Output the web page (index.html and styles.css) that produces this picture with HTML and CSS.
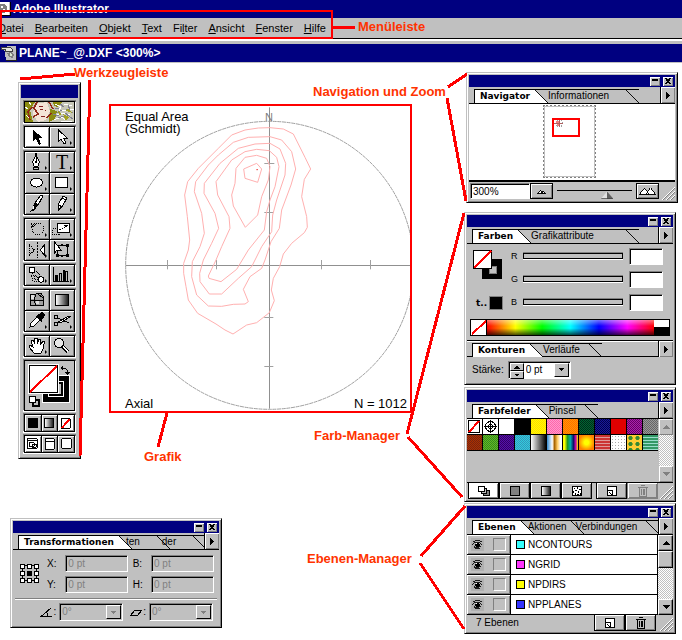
FILE: index.html
```html
<!DOCTYPE html>
<html lang="de">
<head>
<meta charset="utf-8">
<title>Adobe Illustrator</title>
<link rel="stylesheet" href="styles.css">
</head>
<body>
<svg class="defs" width="0" height="0" aria-hidden="true">
  <defs>
    <symbol id="slant" viewBox="0 0 14 15"><path d="M0 0L14 15H0Z" fill="#fff"/><path d="M0 0L14 15" stroke="#000" fill="none"/><path d="M0 .5H14" stroke="#000"/></symbol>
    <symbol id="slant-end" viewBox="0 0 14 15"><path d="M0 .5L14 15" stroke="#000" fill="none"/></symbol>
    <symbol id="more" viewBox="0 0 15 15"><path d="M5 3L10 7.500L5 12Z"/></symbol>
    <symbol id="min" viewBox="0 0 10 9"><path d="M2 2H8V4H2Z"/></symbol>
    <symbol id="close" viewBox="0 0 10 9"><path d="M2 1H4L5 3L6 1H8L6 4.500L8 7H6L5 5.500L4 7H2L4 4.500Z"/></symbol>
    <symbol id="grip" viewBox="0 0 14 14"><path d="M1 14L14 1M5 14L14 5M9 14L14 9" stroke="#fff"/><path d="M2 14L14 2M6 14L14 6M10 14L14 10" stroke="#808080"/></symbol>
    <symbol id="page" viewBox="0 0 16 14"><path d="M3.500 2.500H12.500V11.500H3.500Z" fill="#fff" stroke="#000"/><path d="M3.500 6.500H8.500V11.500M5 8L8 11" fill="none" stroke="#000"/></symbol>
    <symbol id="trash" viewBox="0 0 16 14"><path d="M3 3.500H13M6 1.500H10M4.500 4V12.500H11.500V4M6.500 5V11M8.500 5V11M9.500 5V11" fill="none" stroke="currentColor"/></symbol>
    <symbol id="eye" viewBox="0 0 13 11"><path d="M1 3L4 1H9L12 3M0 6L3 3.500H9L12 6.500M2 7L4 9H8L11 7M2 9L5 10.500H9" fill="none" stroke="#000"/><circle cx="6.500" cy="6" r="2.800"/><path d="M5 4H6V5H5Z" fill="#fff"/></symbol>
    <symbol id="up" viewBox="0 0 8 8"><path d="M4 2L8 6H0Z" fill="currentColor"/></symbol>
    <symbol id="down" viewBox="0 0 8 8"><path d="M0 2H8L4 6Z" fill="currentColor"/></symbol>
  </defs>
</svg>

<div class="screen">
  <header class="appbar">
    <svg class="appicon" viewBox="0 0 11 14"><path d="M0 0H11V14H0Z" fill="#c0c0c0"/><path d="M0 0H9V13H0Z" fill="#fff"/><path d="M0 2H4L7 5V9L4 11H0Z" fill="#808080"/><path d="M1 4H3V6H1ZM3 7H5V10H3Z" fill="#fff"/><path d="M10 0V14M0 13.500H11" stroke="#000"/></svg>
    <span>Adobe Illustrator</span>
  </header>
  <nav class="menubar" aria-label="Hauptmenü">
    <button><u>D</u>atei</button><button><u>B</u>earbeiten</button><button><u>O</u>bjekt</button><button><u>T</u>ext</button><button>Fi<u>l</u>ter</button><button><u>A</u>nsicht</button><button><u>F</u>enster</button><button><u>H</u>ilfe</button>
  </nav>
  <div class="docbar">
    <svg class="docicon" viewBox="0 0 16 16"><path d="M3 3L7 1H15V15H5Z" fill="#c0c0c0"/><path d="M0 2H9L11 4V6H4V4H0Z" fill="#e8e8e0" stroke="#404040"/><path d="M6 8L10 7L13 9L12 13L8 12Z" fill="#808080"/><path d="M9 8L12 10L9 11Z" fill="#d8e8d0"/><path d="M5 15.500H15V4" stroke="#202020" fill="none"/></svg>
    <span>PLANE~_@.DXF &lt;300%&gt;</span>
  </div>

  <aside class="window toolbox" aria-label="Werkzeuge">
    <div class="caption"></div>
    <div class="tools">
      <div class="group"><svg class="venus" viewBox="0 0 49 20"><path d="M0 0H49V20H0Z" fill="#c8c8b8"/><path d="M0 0H10L5 8L8 20H0ZM28 0H37L33 5L29 4ZM25 7L32 9L30 17L24 20Z" fill="#8c8c10"/><path d="M10 2L22 0L25 9L21 18L13 20L8 12Z" fill="#f4e4d8"/><path d="M7 5L3 10L5 18M12 0L9 6L13 12L8 15M24 0L28 7M22 16L26 11" stroke="#902818" fill="none" stroke-width="1.500"/><path d="M14 5L18 4M20 8H21M15 7H18M16 14H20" stroke="#802020"/><path d="M0 5L3 7M4 0L6 3M1 13L4 16M30 2L36 5L34 8L42 9M32 13L38 11L45 13M29 18L36 15L41 18M39 2L47 4M44 8L49 7M36 19H47" fill="none" stroke="#fff"/><path d="M35 2L39 5M37 8L32 11M40 11L48 17M33 16L39 14M43 3L45 8M28 12L34 14M41 7L48 11M30 6L34 7" stroke="#808090" fill="none"/><path d="M38 12L44 15L41 19ZM43 6L47 11L41 9ZM33 9L37 12L34 13Z" fill="#a0a020"/></svg></div>
      <div class="group cells">
        <button class="tool on" aria-label="Auswahl"><svg viewBox="0 0 24 20"><path d="M8 3V14L11 12L14 18L16 17L14 11H18Z"/></svg></button>
        <button class="tool sub" aria-label="Direktauswahl"><svg viewBox="0 0 24 20"><path d="M8.500 3V14L11 12L14 17L16 16L13.500 11H17Z" fill="#fff" stroke="#000"/></svg></button>
      </div>
      <div class="group cells">
        <button class="tool sub" aria-label="Zeichenstift"><svg viewBox="0 0 24 20"><path d="M10.500 1V4L7.500 10L9 14H13L14.500 10L11.500 4V1" fill="#fff" stroke="#000"/><path d="M11 4V10M8 15H14M8 17H14M8 15V17M13.500 15V17" stroke="#000"/><path d="M10 9H12V11H10Z"/></svg></button>
        <button class="tool sub type" aria-label="Text">T</button>
        <button class="tool sub" aria-label="Ellipse"><svg viewBox="0 0 24 20"><ellipse cx="11.500" cy="9.500" rx="6" ry="4.500" fill="#fff" stroke="#000"/></svg></button>
        <button class="tool sub" aria-label="Rechteck"><svg viewBox="0 0 24 20"><path d="M5.500 4.500H17.500V14.500H5.500Z" fill="#fff" stroke="#000"/></svg></button>
        <button class="tool" aria-label="Pinsel"><svg viewBox="0 0 24 20"><path d="M16 1L10 9L13 11L18 2Z" fill="#fff" stroke="#000"/><path d="M9 9L13 11L10 16L4 18L8 14Z"/><path d="M9 12L8 15" stroke="#fff"/></svg></button>
        <button class="tool sub" aria-label="Buntstift"><svg viewBox="0 0 24 20"><path d="M13 2L17 4L12 13L8 16L8 11Z" fill="#fff" stroke="#000"/><path d="M12 4L16 6M9 11L12 13M8 14L10 15L8 17Z" stroke="#000"/></svg></button>
      </div>
      <div class="group cells">
        <button class="tool sub" aria-label="Drehen"><svg viewBox="0 0 24 20"><path d="M8 6L10 4H15L18 7V12L16 15H10L7 12V9" fill="none" stroke="#000" stroke-dasharray="1 1"/><path d="M6 4L8 8L11 5M6 7L7 9" stroke="#000" fill="none"/></svg></button>
        <button class="tool sub" aria-label="Skalieren"><svg viewBox="0 0 24 20"><path d="M2.500 9.500H9.500V15.500H2.500Z" fill="none" stroke="#000" stroke-dasharray="1 1"/><path d="M7.500 4.500H19.500V13.500H7.500Z" fill="#fff" stroke="#000"/><path d="M9 11L15 8" stroke="#000" stroke-dasharray="2 1"/><path d="M14 6H18L16 9Z"/></svg></button>
        <button class="tool sub" aria-label="Spiegeln"><svg viewBox="0 0 24 20"><path d="M4.500 5L9.500 10L4.500 15Z" fill="none" stroke="#000" stroke-dasharray="1 1"/><path d="M12.500 2V18" stroke="#000" stroke-dasharray="2 1"/><path d="M19.500 5V15L15 10Z" fill="#fff" stroke="#000"/></svg></button>
        <button class="tool" aria-label="Frei transformieren"><svg viewBox="0 0 24 20"><path d="M7.500 5.500H17.500V15.500H7.500Z" fill="none" stroke="#000"/><path d="M16 4H19V7H16ZM16 14H19V17H16ZM6 14H9V17H6ZM11 4H13V6H11ZM11 15H13V17H11Z"/><path d="M4.500 2V13L7 10L11 10Z" fill="#fff" stroke="#000"/></svg></button>
      </div>
      <div class="group cells">
        <button class="tool sub" aria-label="Angleichen"><svg viewBox="0 0 24 20"><path d="M7 6H12V8H14V12H11V10H8ZM6 10H9V14H12V16H8Z" fill="none" stroke="#000" stroke-dasharray="1 1"/><path d="M4.500 2.500H9.500V7.500H4.500Z" fill="#fff" stroke="#000"/><circle cx="16" cy="14.500" r="2.700" fill="#fff" stroke="#000"/></svg></button>
        <button class="tool sub" aria-label="Diagramm"><svg viewBox="0 0 24 20"><path d="M3.500 2V16.500H19" fill="none" stroke="#000"/><path d="M5 10H8V16H5ZM13 5H15V16H13Z"/><path d="M9.500 8.500H11.500V16.500H9.500ZM15.500 6.500H17.500V16.500H15.500Z" fill="#c0c0c0" stroke="#000"/></svg></button>
      </div>
      <div class="group cells">
        <button class="tool" aria-label="Gitter"><svg viewBox="0 0 24 20"><path d="M5.500 4.500L16 3.500L18.500 7V15.500H5.500Z" fill="#a0a0a0" stroke="#000"/><path d="M11 4C9 8 9 12 11 16M6 10H18M13 4L18 8" fill="none" stroke="#000"/><path d="M6 5H9V9H6ZM11 11H14V14H11Z" fill="#e0e0e0"/></svg></button>
        <button class="tool" aria-label="Verlauf"><span class="ramp"></span></button>
        <button class="tool sub" aria-label="Pipette"><svg viewBox="0 0 24 20"><path d="M12 6L6 12L5 16L9 15L15 9" fill="#fff" stroke="#000"/><path d="M11 5L13 3H14L17 1L20 3L19 7L17 8V10L16 11Z"/></svg></button>
        <button class="tool sub" aria-label="Schere"><svg viewBox="0 0 24 20"><path d="M8 7L19 12M8 12L20 6" stroke="#000"/><path d="M8 11L19 5H21L12 11Z" fill="#fff" stroke="#000"/><circle cx="6" cy="6" r="2" fill="none" stroke="#000"/><circle cx="6" cy="13" r="2" fill="none" stroke="#000"/></svg></button>
      </div>
      <div class="group cells">
        <button class="tool sub" aria-label="Hand"><svg viewBox="0 0 24 20"><path d="M9 17L4 11L5 9L8 11L6 5L8 4L10 8L9.500 2H12L12.500 8L14 3L16 3.500L15.500 9L18 5L19.500 6L18 13L16 17Z" fill="#fff" stroke="#000"/></svg></button>
        <button class="tool" aria-label="Lupe"><svg viewBox="0 0 24 20"><circle cx="9" cy="7" r="4.500" fill="#e8e8e8" stroke="#000"/><path d="M12 10L18 16" stroke="#000" stroke-width="3"/><path d="M13 10.500L18 15.500" stroke="#fff"/></svg></button>
      </div>
      <div class="group paint"><svg viewBox="0 0 49 49">
        <path d="M18 15H44V41H18Z"/><path d="M17.500 14.500H44.500V41.500H17.500Z" fill="none" stroke="#fff"/><path d="M23.500 20.500H38.500V35.500H23.500Z" fill="none" stroke="#fff"/><path d="M26 23H36V33H26Z" fill="#c0c0c0"/>
        <path d="M4.500 4.500H32.500V31.500H4.500Z" fill="#fff" stroke="#000"/><path d="M3.500 3.500H33.500V32.500H3.500Z" fill="none" stroke="#fff"/><path d="M5 31L32 5" stroke="#f00" stroke-width="2"/>
        <path d="M37 7H40L42 9V12" stroke="#000" fill="none"/><path d="M35 7L38 4V10ZM39 11H45L42 14Z"/>
        <path d="M8 39H14V45H8Z" fill="#c0c0c0" stroke="#000" stroke-width="2"/><path d="M4.500 35.500H10.500V41.500H4.500Z" fill="#fff" stroke="#000"/>
      </svg></div>
      <div class="group modes">
        <button class="tool" aria-label="Farbe"><svg viewBox="0 0 16 16"><path d="M3 3H13V13H3Z"/></svg></button>
        <button class="tool" aria-label="Verlaufsfüllung"><span class="ramp small"></span></button>
        <button class="tool on" aria-label="Ohne"><svg viewBox="0 0 16 16"><path d="M3.500 3.500H12.500V13.500H3.500Z" fill="#fff" stroke="#000"/><path d="M4 13L12 4" stroke="#f00" stroke-width="2"/></svg></button>
      </div>
      <div class="group modes">
        <button class="tool on" aria-label="Standardfenster"><svg viewBox="0 0 16 16"><path d="M2.500 2.500H12.500V12.500H2.500ZM3 4.500H12M4.500 6.500H9.500V10.500H4.500ZM7.500 8.500H11.500V11.500H7.500Z" fill="#fff" stroke="#000"/></svg></button>
        <button class="tool" aria-label="Vollbild mit Menü"><svg viewBox="0 0 16 16"><path d="M3.500 2.500H12.500V13.500H3.500ZM3 5.500H13" fill="#fff" stroke="#000"/></svg></button>
        <button class="tool" aria-label="Vollbild"><svg viewBox="0 0 16 16"><rect x="3.500" y="2.500" width="10" height="10" rx="1" fill="#fff" stroke="#000"/></svg></button>
      </div>
    </div>
  </aside>

  <figure class="plot">
    <svg viewBox="18 18 897 915" preserveAspectRatio="none">
      <g fill="none" stroke="#a0a0a0" stroke-width="3">
        <circle cx="494" cy="496" r="432" stroke-dasharray="12 2"/>
        <path d="M493.500 22V926M62 496.500H915" stroke="#909090"/>
        <path d="M187.500 480V508M334.500 480V508M649.500 480V508M796.500 480V508M478 190.500H508M478 337.500H505M478 652.500H505M478 799.500H505"/>
      </g>
      <g fill="none" stroke="#ffb0b0" stroke-width="3" stroke-linejoin="round">
        <path d="M495 83L535 87L565 102L600 172L617 207L598 238L590 290L605 350L607 382L598 398L560 430L535 462L524 500L505 535L499 570L508 602L493 638L455 668L425 675L384 702L360 690L333 672L278 640L250 600L243 560L236 520V490L250 450L254 420L247 350L239 285L248 245L280 205L340 145L380 105L420 90L460 84Z"/>
        <path d="M495 110L530 120L560 155L572 207L558 255L530 330L523 385L498 425L480 480L470 505L435 530L415 568L430 605L420 612L385 613L350 619L310 618L275 585L260 530L262 485L285 440L298 400L290 340L268 275L272 245L310 195L340 165L385 127L430 112Z"/>
        <path d="M495 130L525 147L542 190L540 225L515 300L503 345L500 395L470 440L440 500L400 535L350 582H313L285 545L284 520L295 480L320 430L341 385L330 340L297 280L298 250L345 190L400 145L450 132Z"/>
        <path d="M493 152L515 172L522 200L510 260L495 300L485 335L478 390L430 450L395 508L348 545L312 535L310 528L333 480L350 440L375 385L372 350L338 285L333 245L380 180L420 155L455 148Z"/>
        <path d="M455 166L485 175L495 200L490 240L470 290L458 345L421 382L385 318L380 285L390 250L393 205L420 172Z"/>
        <path d="M455 190L470 207L458 247L420 235L416 207Z"/>
        <path d="M454 209H459" stroke="#f04040"/>
      </g>
    </svg>
    <span class="north">N</span>
    <figcaption>
      <p>Equal Area<br>(Schmidt)</p>
      <p class="foot"><span>Axial</span><span>N = 1012</span></p>
    </figcaption>
  </figure>

  <section class="window navigator">
    <div class="caption"><button aria-label="Minimieren"><svg viewBox="0 0 10 9"><use href="#min"/></svg></button><button aria-label="Schließen"><svg viewBox="0 0 10 9"><use href="#close"/></svg></button></div>
    <div class="tabs">
      <button class="tab active">Navigator<svg class="cut"><use href="#slant"/></svg></button><button class="tab">Informationen<svg class="cut gap"><use href="#slant-end"/></svg></button><button class="more" aria-label="Palettenmenü"><svg viewBox="0 0 15 15"><use href="#more"/></svg></button>
    </div>
    <div class="preview"><div class="sheet"><div class="view"><svg viewBox="0 0 10 8"><circle cx="5" cy="3.500" r="3.500" fill="none" stroke="#a0a0a0" stroke-dasharray="1 1"/><path d="M2 1H6V5L3 6Z" fill="#f08080"/><path d="M5 0V7M0 3.500H9" stroke="#b06060"/></svg></div></div></div>
    <div class="navbar">
      <input type="text" value="300%" aria-label="Zoomstufe">
      <button class="raised" aria-label="Auszoomen"><svg viewBox="0 0 22 14"><path d="M7 9.500L10 6L12 9M10 9.500H15L12.500 6.500L11 9M6 9.500H16" fill="#fff" stroke="#000"/></svg></button>
      <input class="zoom" type="range" min="0" max="100" value="70" aria-label="Zoom">
      <button class="raised" aria-label="Einzoomen"><svg viewBox="0 0 22 14"><path d="M2.500 10.500L8 4L13 10.500ZM9.500 10.500L14 3.500L19.500 10.500Z" fill="#fff" stroke="#000"/></svg></button>
      <svg class="grip"><use href="#grip"/></svg>
    </div>
  </section>

  <section class="window colors">
    <div class="caption"><button aria-label="Minimieren"><svg viewBox="0 0 10 9"><use href="#min"/></svg></button><button aria-label="Schließen"><svg viewBox="0 0 10 9"><use href="#close"/></svg></button></div>
    <div class="tabs">
      <button class="tab active">Farben<svg class="cut"><use href="#slant"/></svg></button><button class="tab">Grafikattribute<svg class="cut far"><use href="#slant-end"/></svg></button><button class="more" aria-label="Palettenmenü"><svg viewBox="0 0 15 15"><use href="#more"/></svg></button>
    </div>
    <div class="mixer">
      <div class="chips">
        <svg viewBox="0 0 29 29"><path d="M9 9H29V29H9Z"/><path d="M16 16H23V23H16Z" fill="#c0c0c0" stroke="#808080"/><path d="M.5 .5H18.500V18.500H.5Z" fill="#fff" stroke="#000"/><path d="M1 18L18 1" stroke="#f00" stroke-width="2"/></svg>
        <div class="web"><span>t..</span><i></i></div>
      </div>
      <div class="channels">
        <label for="r">R</label><input id="r" type="range"><input type="text" aria-label="R Wert">
        <label for="g">G</label><input id="g" type="range"><input type="text" aria-label="G Wert">
        <label for="b">B</label><input id="b" type="range"><input type="text" aria-label="B Wert">
      </div>
    </div>
    <div class="spectrum"><svg viewBox="0 0 16 15"><path d="M0 0H16V15H0Z" fill="#fff"/><path d="M1 14L15 1" stroke="#f00" stroke-width="2"/><path d="M15.500 0V15" stroke="#000"/></svg><div class="hues"></div><div class="bw"></div></div>
    <div class="tabs second">
      <button class="tab active">Konturen<svg class="cut"><use href="#slant"/></svg></button><button class="tab">Verläufe<svg class="cut near"><use href="#slant-end"/></svg></button><button class="more" aria-label="Palettenmenü"><svg viewBox="0 0 15 15"><use href="#more"/></svg></button>
    </div>
    <div class="stroke">
      <label for="weight">Stärke:</label>
      <div class="combo">
        <div class="spin"><button aria-label="Mehr"><svg viewBox="0 0 8 8"><use href="#up"/></svg></button><button aria-label="Weniger"><svg viewBox="0 0 8 8"><use href="#down"/></svg></button></div>
        <select id="weight"><option>0 pt</option></select>
        <span class="drop"><svg viewBox="0 0 8 8"><use href="#down"/></svg></span>
      </div>
    </div>
  </section>

  <section class="window swatches">
    <div class="caption"><button aria-label="Minimieren"><svg viewBox="0 0 10 9"><use href="#min"/></svg></button><button aria-label="Schließen"><svg viewBox="0 0 10 9"><use href="#close"/></svg></button></div>
    <div class="tabs">
      <button class="tab active">Farbfelder<svg class="cut"><use href="#slant"/></svg></button><button class="tab">Pinsel<svg class="cut near"><use href="#slant-end"/></svg></button><button class="more" aria-label="Palettenmenü"><svg viewBox="0 0 15 15"><use href="#more"/></svg></button>
    </div>
    <div class="pane">
      <div class="wells">
        <i class="white"><svg viewBox="0 0 15 15"><path d="M1.500 1.500H12.500V13.500H1.500Z" fill="#fff" stroke="#000"/><path d="M2 13L12 2" stroke="#f00" stroke-width="2"/></svg></i>
        <i class="white"><svg viewBox="0 0 15 15"><circle cx="7.500" cy="7.500" r="5" fill="none" stroke="#000"/><circle cx="7.500" cy="7.500" r="2" fill="none" stroke="#000"/><path d="M7.500 1V14M1 7.500H14" stroke="#000"/></svg></i>
        <i class="white"></i><i class="black"></i><i class="yellow"></i><i class="pink"></i><i class="orange"></i><i class="forest"></i><i class="navy"></i><i class="red"></i><i class="purple"></i><i class="gray"></i>
        <i class="rust"></i><i class="green"></i><i class="violet"></i><i class="cyan"></i><i class="fade"></i><i class="chrome"></i><i class="rainbow"></i><i class="sun"></i><i class="brick"></i><i class="noise"></i><i class="leaf"></i><i class="stripes"></i>
      </div>
      <div class="scroll off"><button aria-label="Nach oben"><svg><use href="#up"/></svg></button><span class="track"></span><button aria-label="Nach unten"><svg><use href="#down"/></svg></button></div>
    </div>
    <div class="actions">
      <button class="raised on" aria-label="Alle"><svg viewBox="0 0 16 14"><path d="M7.500 6.500H13.500V11.500H7.500Z" fill="#808080" stroke="#000"/><path d="M5.500 4.500H10.500V9.500H5.500Z" fill="#c0c0c0" stroke="#000"/><path d="M2.500 2.500H8.500V7.500H2.500Z" fill="#fff" stroke="#000"/></svg></button>
      <button class="raised" aria-label="Farbfelder"><svg viewBox="0 0 16 14"><path d="M3.500 2.500H12.500V11.500H3.500Z" fill="#808080" stroke="#000"/></svg></button>
      <button class="raised" aria-label="Verläufe"><span class="ramp small"></span></button>
      <button class="raised" aria-label="Muster"><svg viewBox="0 0 16 14"><path d="M3.500 2.500H12.500V11.500H3.500Z" fill="#fff" stroke="#000"/><path d="M5 4H6V5H5ZM8 3H9V5H8ZM10 5H12V6H10ZM6 6H8V7H6ZM4 7H5V9H4ZM9 7H10V9H9ZM6 9H7V11H6ZM11 9H12V11H11ZM8 10H10V11H8Z"/></svg></button>
      <button class="raised set" aria-label="Neu"><svg viewBox="0 0 16 14"><use href="#page"/></svg></button>
      <button class="raised dim" aria-label="Löschen"><svg viewBox="0 0 16 14"><use href="#trash"/></svg></button>
      <svg class="grip"><use href="#grip"/></svg>
    </div>
  </section>

  <section class="window layers">
    <div class="caption"><button aria-label="Minimieren"><svg viewBox="0 0 10 9"><use href="#min"/></svg></button><button aria-label="Schließen"><svg viewBox="0 0 10 9"><use href="#close"/></svg></button></div>
    <div class="tabs">
      <button class="tab active">Ebenen<svg class="cut"><use href="#slant"/></svg></button><button class="tab tucked">Aktionen<svg class="cut close"><use href="#slant-end"/></svg></button><button class="tab tucked">Verbindungen<svg class="cut near"><use href="#slant-end"/></svg></button><button class="more" aria-label="Palettenmenü"><svg viewBox="0 0 15 15"><use href="#more"/></svg></button>
    </div>
    <div class="pane">
      <ul class="list">
        <li><div class="flags"><button aria-label="Sichtbar"><svg viewBox="0 0 13 11"><use href="#eye"/></svg></button><button aria-label="Fixiert"></button></div><span class="name"><i class="c1"></i>NCONTOURS</span></li>
        <li><div class="flags"><button aria-label="Sichtbar"><svg viewBox="0 0 13 11"><use href="#eye"/></svg></button><button aria-label="Fixiert"></button></div><span class="name"><i class="c2"></i>NGRID</span></li>
        <li><div class="flags"><button aria-label="Sichtbar"><svg viewBox="0 0 13 11"><use href="#eye"/></svg></button><button aria-label="Fixiert"></button></div><span class="name"><i class="c3"></i>NPDIRS</span></li>
        <li><div class="flags"><button aria-label="Sichtbar"><svg viewBox="0 0 13 11"><use href="#eye"/></svg></button><button aria-label="Fixiert"></button></div><span class="name"><i class="c4"></i>NPPLANES</span></li>
      </ul>
      <div class="scroll"><button aria-label="Nach oben"><svg><use href="#up"/></svg></button><span class="thumb"></span><span class="track"></span><button aria-label="Nach unten"><svg><use href="#down"/></svg></button></div>
    </div>
    <div class="actions plain">
      <span class="count">7 Ebenen</span>
      <button class="raised" aria-label="Neue Ebene"><svg viewBox="0 0 16 14"><use href="#page"/></svg></button>
      <button class="raised" aria-label="Löschen"><svg viewBox="0 0 16 14"><use href="#trash"/></svg></button>
      <svg class="grip"><use href="#grip"/></svg>
    </div>
  </section>

  <section class="window transform">
    <div class="caption"><button aria-label="Minimieren"><svg viewBox="0 0 10 9"><use href="#min"/></svg></button><button aria-label="Schließen"><svg viewBox="0 0 10 9"><use href="#close"/></svg></button></div>
    <div class="tabs">
      <button class="tab active">Transformationen<svg class="cut"><use href="#slant"/></svg></button><button class="tab tucked">ten<svg class="cut gap"><use href="#slant-end"/></svg></button><button class="tab tucked">der<svg class="cut gap"><use href="#slant-end"/></svg></button><button class="more" aria-label="Palettenmenü"><svg viewBox="0 0 15 15"><use href="#more"/></svg></button>
    </div>
    <div class="fields">
      <svg class="origin" viewBox="0 0 19 20"><path d="M2.500 2.500H16.500V17.500H2.500Z" fill="none" stroke="#000"/><path d="M.5 1.500H4.500V5.500H.5ZM7.500 1.500H11.500V5.500H7.500ZM14.500 1.500H18.500V5.500H14.500ZM.5 8.500H4.500V12.500H.5ZM14.500 8.500H18.500V12.500H14.500ZM.5 15.500H4.500V19.500H.5ZM7.500 15.500H11.500V19.500H7.500ZM14.500 15.500H18.500V19.500H14.500Z" fill="#fff" stroke="#000"/><path d="M7 8H12V13H7Z"/></svg>
      <div class="coords">
        <label for="tx">X:</label><input id="tx" type="text" value="0 pt" disabled>
        <label for="tb">B:</label><input id="tb" type="text" value="0 pt" disabled>
        <label for="ty">Y:</label><input id="ty" type="text" value="0 pt" disabled>
        <label for="th">H:</label><input id="th" type="text" value="0 pt" disabled>
      </div>
    </div>
    <div class="angles">
      <label for="rot"><svg viewBox="0 0 12 10"><path d="M11 1L1 9.500H12M6 5Q8 6 8 9" fill="none" stroke="#000"/></svg>:</label>
      <div class="combo"><select id="rot" disabled><option>0°</option></select><span class="drop"><svg viewBox="0 0 8 8"><use href="#down"/></svg></span></div>
      <label for="shear"><svg viewBox="0 0 12 10"><path d="M4.500 3.500H11.500L7.500 8.500H.5Z" fill="none" stroke="#000"/></svg>:</label>
      <div class="combo"><select id="shear" disabled><option>0°</option></select><span class="drop"><svg viewBox="0 0 8 8"><use href="#down"/></svg></span></div>
    </div>
  </section>

  <svg class="pointers" viewBox="0 0 682 640" width="682" height="640" aria-hidden="true">
    <path d="M1 11H332V38H1Z" stroke-width="2"/>
    <path d="M333 27.500H355M20 79L75 74M90 80L80 456M448 87L467 74M447 98L466 201M464 213L407 434M408 437L462 497M421 556L465 506M420 563L464 629M167 413L158 447"/>
  </svg>
  <span class="note n-menu">Menüleiste</span>
  <span class="note n-tools">Werkzeugleiste</span>
  <span class="note n-nav">Navigation und Zoom</span>
  <span class="note n-color">Farb-Manager</span>
  <span class="note n-plot">Grafik</span>
  <span class="note n-layer">Ebenen-Manager</span>
</div>
</body>
</html>
```

FILE: styles.css
```css
* { box-sizing: border-box; }

body {
  margin: 0;
  background: #fff;
  color: #000;
  font: 10px/12px "Liberation Sans", Arial, sans-serif;
}

.defs { position: absolute; }
svg { display: block; shape-rendering: crispEdges; }
button, input, select { font: inherit; color: inherit; margin: 0; padding: 0; border: 0; border-radius: 0; }
button { background: #c0c0c0; }
p, figure, ul { margin: 0; padding: 0; }
ul { list-style: none; }

.screen { position: relative; min-height: 100vh; overflow: hidden; }

/* Application frame */
.appbar, .docbar {
  display: flex;
  align-items: center;
  height: 18px;
  background: #000080;
  color: #fff;
  font: bold 12px/18px "Liberation Sans", Arial, sans-serif;
}
.appbar { gap: 2px; }
.appicon { width: 11px; height: 14px; }
.docbar { gap: 2px; padding-left: 1px; height: 19px; border-bottom: 1px solid #c0c0c0; }
.docicon { width: 16px; height: 16px; }

.menubar {
  display: flex;
  gap: 11px;
  height: 21px;
  margin-bottom: 5px;
  background: #c0c0c0;
  border-bottom: 1px solid #000;
  box-shadow: 0 2px #fff, 0 5px #c0c0c0;
}
.menubar button { font-size: 11px; line-height: 20px; }
.menubar button:first-child { margin-left: -2px; }

/* Floating windows */
.window {
  position: absolute;
  display: flex;
  flex-direction: column;
  padding: 2px;
  background: #c0c0c0;
  border: 1px solid;
  border-color: #c0c0c0 #000 #000 #c0c0c0;
  box-shadow: inset 1px 1px #fff, inset -1px -1px #808080;
}
.toolbox { left: 18px; top: 82px; width: 63px; }
.navigator { left: 466px; top: 72px; width: 212px; }
.colors { left: 464px; top: 212px; width: 212px; }
.swatches { left: 464px; top: 387px; width: 212px; }
.layers { left: 464px; top: 503px; width: 212px; }
.transform { left: 10px; top: 518px; width: 212px; }

.caption {
  display: flex;
  justify-content: flex-end;
  align-items: center;
  gap: 3px;
  height: 12px;
  padding-right: 2px;
  background: #000080;
}
.caption button { width: 10px; height: 9px; box-shadow: inset 1px 1px #fff, inset -1px -1px #808080; }
.caption svg { width: 10px; height: 9px; }
.toolbox .caption { height: 13px; }

/* Tool palette */
.tools { display: flex; flex-direction: column; gap: 3px; padding: 3px; }
.group {
  background: #000;
  border: 1px solid #000;
  box-shadow: -1px -1px #808080, 1px 1px #fff, 1px -1px #808080, -1px 1px #fff;
}
.venus { width: 100%; height: 20px; }
.cells { display: grid; grid-template-columns: 1fr 1fr; grid-auto-rows: 20px; gap: 1px; }
.modes { display: grid; grid-template-columns: repeat(3, 1fr); grid-auto-rows: 16px; gap: 1px; }
.tool { position: relative; box-shadow: inset 1px 1px #fff, inset -1px -1px #808080; }
.tool svg { width: 100%; height: 100%; }
.tool.on { background: #fff; }
.tool.sub::after {
  content: "";
  position: absolute;
  right: 2px;
  bottom: 2px;
  border: solid transparent;
  border-width: 2px 0 2px 2px;
  border-left-color: #000;
}
.type { font: 20px/20px "Liberation Serif", "Times New Roman", serif; }
.ramp { display: block; width: 14px; height: 12px; margin: 0 auto; border: 1px solid #000; background: linear-gradient(90deg, #fff, #202020); }
.ramp.small { width: 10px; height: 10px; }
.raised .ramp { margin: 0; }
.paint { background: #c0c0c0; }
.paint svg { width: 100%; height: 49px; }

/* Stereographic plot */
.plot { position: absolute; left: 109px; top: 104px; width: 303px; height: 309px; border: 2px solid #f00; }
.plot svg { width: 100%; height: 100%; shape-rendering: auto; }
.north { position: absolute; left: 154px; top: 5px; font-size: 11px; color: #808080; }
figcaption {
  position: absolute;
  inset: 0;
  display: flex;
  flex-direction: column;
  justify-content: space-between;
  padding: 5px 3px 0 14px;
  font-size: 13px;
  line-height: 12px;
}
.foot { display: flex; justify-content: space-between; line-height: 14px; }

/* Tabs */
.tabs { display: flex; height: 17px; padding: 2px 0 0 5px; border-bottom: 1px solid #000; position: relative; }
.tab {
  display: flex;
  flex: none;
  height: 14px;
  line-height: 14px;
  background: none;
  white-space: nowrap;
  box-shadow: inset 0 1px #000;
}
.tab.active {
  position: relative;
  z-index: 1;
  padding-left: 6px;
  background: linear-gradient(#fff, #fff) no-repeat 0 0 / calc(100% - 14px) 100%;
  font: bold 9px/15px "DejaVu Sans", Verdana, sans-serif;
  box-shadow: inset 1px 1px #000;
}
.cut { width: 14px; height: 14px; flex: none; }
.active .cut { margin-left: 4px; }
.cut.close { margin-left: 3px; }
.cut.near { margin-left: 8px; }
.cut.gap { margin-left: 16px; }
.cut.far { margin-left: 31px; }
/* The neighbouring tab starts underneath the slanted edge. */
.tucked { margin-left: -6px; }
.tucked + .tucked { margin-left: -8px; }
.more {
  position: absolute;
  right: 0;
  top: 0;
  z-index: 2;
  width: 15px;
  height: 16px;
  border-left: 1px solid #000;
  box-shadow: inset 1px 1px #fff, inset -1px -1px #808080;
}
.more svg { width: 14px; height: 15px; }

.raised {
  display: flex;
  align-items: center;
  justify-content: center;
  height: 16px;
  border: 1px solid #000;
  box-shadow: inset 1px 1px #fff, inset -1px -1px #808080;
}
.raised.on { background: #fff; }
.raised.dim { color: #808080; border-color: #808080; }
.raised svg { width: 16px; height: 14px; }
.grip { width: 14px; height: 14px; align-self: flex-end; }

input[type="text"] {
  min-width: 0;
  background: #fff;
  border: 1px solid;
  border-color: #808080 #fff #fff #808080;
  box-shadow: inset 1px 1px #000;
}
input[type="range"] { appearance: none; min-width: 0; background: none; }

/* Navigator */
.preview { display: flex; justify-content: center; height: 78px; padding: 1px 6px 0 0; background: #fff; border-bottom: 2px solid #000; }
.sheet { width: 53px; height: 73px; border: 2px dotted #808080; outline: 1px solid #c0c0c0; outline-offset: -2px; padding: 11px 0 0 7px; }
.view { width: 28px; height: 19px; border: 2px solid #f00; }
.view svg { width: 10px; height: 8px; }
.navbar { display: flex; align-items: center; gap: 4px; height: 18px; padding-left: 1px; }
.navbar input[type="text"] { width: 60px; height: 16px; padding-left: 2px; margin-right: -4px; }
.navbar .raised { width: 23px; }
.navbar .raised svg { width: 21px; }
.navbar .grip { margin-left: -2px; }
.navbar .zoom { flex: 1; height: 14px; background: linear-gradient(#000, #000) no-repeat 0 6px / 100% 1px; }
.zoom::-webkit-slider-thumb {
  appearance: none;
  width: 12px;
  height: 7px;
  margin-top: 8px;
  background: linear-gradient(transparent 86%, #000 0), linear-gradient(90deg, #e0e0e0 50%, #606060 50%);
  clip-path: polygon(50% 0, 100% 100%, 0 100%);
}

/* Colours */
.mixer { display: flex; gap: 8px; height: 74px; padding: 3px 10px 0 6px; }
.chips { width: 30px; padding-top: 3px; }
.chips > svg { width: 29px; height: 29px; }
.web { display: flex; justify-content: space-between; align-items: flex-end; padding: 17px 0 0 3px; }
.web span { font: bold 9px/14px "DejaVu Sans", Verdana, sans-serif; }
.web i { width: 14px; height: 14px; background: #000; border: 1px solid #808080; }
.channels { flex: 1; display: grid; grid-template-columns: 6px 1fr 34px; grid-auto-rows: 18px; gap: 5px 6px; align-items: center; }
.channels label { font-size: 9px; }
.channels input[type="range"] { height: 6px; border: 1px solid #000; box-shadow: 0 -1px #808080, 0 1px #fff; }
.channels input[type="range"]::-webkit-slider-thumb { appearance: none; width: 0; height: 0; }
.channels input[type="text"] { height: 17px; width: 34px; }
.spectrum { display: flex; height: 17px; margin: 1px 3px 4px; border: 1px solid #000; }
.spectrum svg { width: 16px; height: 15px; }
.hues {
  flex: 1;
  background:
    linear-gradient(rgba(255,255,255,.45), transparent 40%, transparent 55%, rgba(0,0,0,.7)),
    linear-gradient(90deg, #f00, #ff0 17%, #0f0 33%, #0ff 50%, #00f 67%, #f0f 84%, #f00);
}
.bw { width: 15px; background: linear-gradient(#fff 50%, #000 0); }
.second { border-top: 1px solid #000; box-shadow: inset 0 1px #fff; }
.stroke { display: flex; align-items: center; gap: 4px; height: 25px; padding-left: 5px; }

.combo { display: flex; position: relative; height: 18px; border: 1px solid; border-color: #808080 #fff #fff #808080; background: #fff; box-shadow: inset 1px 1px #000; }
.combo select { flex: 1; min-width: 0; appearance: none; background: none; padding-left: 2px; opacity: 1; }
.drop { position: absolute; right: 1px; top: 1px; bottom: 1px; width: 15px; display: grid; place-items: center; background: #c0c0c0; border: 1px solid; border-color: #fff #000 #000 #fff; pointer-events: none; }
.drop svg { width: 7px; height: 7px; }
.stroke .combo { width: 63px; }
.spin { display: grid; grid-template-rows: 1fr 1fr; width: 15px; padding: 1px 0 0 1px; }
.spin button { display: grid; place-items: center; border: 1px solid; border-color: #fff #000 #000 #fff; }
.spin svg { width: 6px; height: 6px; }

/* Swatches */
.pane { display: flex; }
.wells { flex: 1; display: grid; grid-template-columns: repeat(12, 15px); grid-auto-rows: 15px; gap: 1px; align-content: start; height: 63px; background: linear-gradient(#000, #000) no-repeat 0 0 / 191px 32px; }
.wells i { background-size: 2px 2px; }
.wells svg { width: 15px; height: 15px; }
.white { background: #fff; }
.black { background: #000; }
.yellow { background: repeating-conic-gradient(#ff0 0 25%, #ffd800 0 50%); }
.pink { background: repeating-conic-gradient(#ff99cc 0 25%, #ff66aa 0 50%); }
.orange { background: repeating-conic-gradient(#ff9900 0 25%, #ff6a00 0 50%); }
.forest { background: repeating-conic-gradient(#006633 0 25%, #002a18 0 50%); }
.navy { background: repeating-conic-gradient(#1a1a99 0 25%, #000050 0 50%); }
.red { background: #e00000; }
.purple { background: repeating-conic-gradient(#aa22aa 0 25%, #660066 0 50%); }
.gray { background: repeating-conic-gradient(#999 0 25%, #666 0 50%); }
.rust { background: repeating-conic-gradient(#aa3300 0 25%, #772211 0 50%); }
.green { background: repeating-conic-gradient(#66bb22 0 25%, #338822 0 50%); }
.violet { background: repeating-conic-gradient(#5511aa 0 25%, #330066 0 50%); }
.cyan { background: repeating-conic-gradient(#33ccdd 0 25%, #3399bb 0 50%); }
.wells .fade, .wells .chrome, .wells .rainbow, .wells .sun { background-size: 100% 100%; }
.fade { background: linear-gradient(90deg, #fff, #000); }
.chrome { background: linear-gradient(90deg, #3388cc, #fff 35%, #aa6600 50%, #ffcc66 70%, #fff 90%); }
.rainbow { background: linear-gradient(90deg, #ff0 10%, #292 30%, #0aa 50%, #116 70%, #c0a 85%, #ee0); }
.sun { background: radial-gradient(#ff0 20%, #ff8000 75%); }
.wells .brick { background: repeating-linear-gradient(#c33 0 2px, #d99 2px 3px); background-size: auto; }
.wells .noise { background: radial-gradient(#aaa 35%, #fff 40%); background-size: 3px 3px; }
.wells .leaf { background: radial-gradient(#383 40%, #fc3 45%); background-size: 7px 6px; }
.wells .stripes { background: repeating-linear-gradient(#396 0 2px, #9dc 2px 3px); background-size: auto; }

.scroll { display: flex; flex-direction: column; width: 16px; border-left: 1px solid #000; }
.scroll button, .thumb { height: 16px; display: grid; place-items: center; border: 1px solid; border-color: #fff #000 #000 #fff; box-shadow: inset -1px -1px #808080; background: #c0c0c0; }
.scroll svg { width: 8px; height: 8px; }
.scroll.off { color: #808080; border-left-color: #c0c0c0; }
.scroll.off button { border-color: #fff #808080 #808080 #fff; box-shadow: none; }
.track { flex: 1; background: repeating-conic-gradient(#fff 0 25%, #c0c0c0 0 50%) 0 0 / 2px 2px; }

.actions { display: flex; height: 17px; padding-left: 1px; border-top: 1px solid #000; }
.actions.plain { border-top: 0; height: 16px; }
.actions .raised { width: 31px; border-top: 0; }
.actions .set { margin-left: 4px; }
.actions .grip { margin-left: auto; }
.actions.plain .grip { margin-left: 3px; }

/* Layers */
.list { flex: 1; background: #fff; }
.list li { display: flex; height: 20px; border-bottom: 1px solid #000; }
.flags { display: flex; gap: 9px; width: 44px; padding: 3px 4px; background: #c0c0c0; border-right: 1px solid #000; box-shadow: inset 1px 1px #fff, inset -1px -1px #808080; }
.flags button { width: 13px; height: 13px; border: 1px solid; border-color: #808080 #fff #fff #808080; flex: none; }
.flags button:first-child { border-color: #b0b0b0; background: #b0b0b0; }
.flags svg { width: 11px; height: 11px; }
.name { display: flex; align-items: center; gap: 3px; padding-left: 5px; }
.name i { width: 9px; height: 9px; border: 1px solid #000; }
.c1 { background: #33ffff; }
.c2 { background: #ff33ff; }
.c3 { background: #ffff00; }
.c4 { background: #3333ff; }
.thumb { height: 17px; }
.count { flex: 1; padding-left: 8px; line-height: 16px; }

/* Transform */
.fields { display: flex; gap: 8px; padding: 5px 3px 5px 5px; border-bottom: 1px solid #808080; margin: 0 2px; box-shadow: 0 1px #fff; }
.origin { width: 19px; height: 20px; margin-top: 8px; }
.coords { flex: 1; display: grid; grid-template-columns: 14px 63px 14px 63px; gap: 4px 0; justify-content: space-between; align-items: center; }
.transform input[type="text"] { width: 63px; height: 17px; background: #c0c0c0; color: #808080; padding-left: 2px; }
.transform .combo { width: 64px; background: #c0c0c0; color: #808080; }
.angles { display: flex; gap: 3px; align-items: center; justify-content: flex-end; padding: 4px 6px 4px 0; }
.angles label { display: flex; align-items: center; gap: 1px; }
.angles label svg { width: 12px; height: 10px; }
.angles .combo + label { margin-left: 4px; }

/* Annotations */
.pointers { position: absolute; left: 0; top: 0; fill: none; stroke: #f00; stroke-width: 3; pointer-events: none; }
.note { position: absolute; color: #ff3300; font: bold 13px/15px "Liberation Sans", Arial, sans-serif; white-space: nowrap; }
.n-menu { left: 358px; top: 19px; }
.n-tools { left: 74px; top: 65px; }
.n-nav { left: 313px; top: 84px; }
.n-color { left: 314px; top: 428px; }
.n-plot { left: 144px; top: 449px; }
.n-layer { left: 307px; top: 551px; }
```
